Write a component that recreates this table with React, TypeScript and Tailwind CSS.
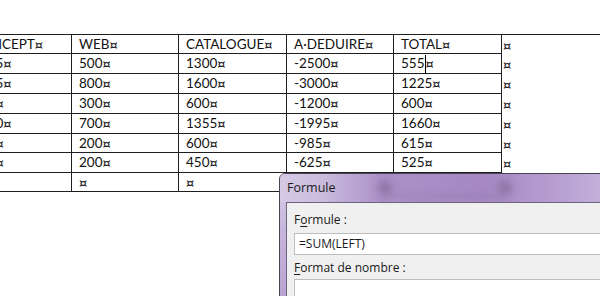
import React from "react";

const cols = ["CONCEPT", "WEB", "CATALOGUE", "A·DEDUIRE", "TOTAL"];
const rows = [
  ["1255", "500", "1300", "-2500", "555"],
  ["1825", "800", "1600", "-3000", "1225"],
  ["900", "300", "600", "-1200", "600"],
  ["1600", "700", "1355", "-1995", "1660"],
  ["800", "200", "600", "-985", "615"],
  ["500", "200", "450", "-625", "525"],
  ["", "", "", "", ""],
];
const widths = ["w-[108px]", "w-[107px]", "w-[108px]", "w-[107px]", "w-[108px]"];
const heights = ["h-[20px]", "h-[20px]", "h-[20px]", "h-[20px]", "h-[20px]", "h-[19px]", "h-[20px]", "h-[19px]"];

// Word's end-of-cell mark
function Mark() {
  return (
    <span className="text-[13px]" style={{ fontFamily: "'DejaVu Sans', sans-serif" }}>
      ¤
    </span>
  );
}

function Cell({ text, i, cursor }: { text: string; i: number; cursor?: boolean }) {
  return (
    <div
      className={`${widths[i]} shrink-0 border-r border-b border-[#1e1e1e] pl-[7px] pt-[1px] flex items-center ${
        i === 0 ? "border-l" : ""
      }`}
    >
      <span className="whitespace-nowrap">
        {text}
        {cursor && <span className="inline-block w-px h-[19px] bg-black align-middle -my-2" />}
        <Mark />
      </span>
    </div>
  );
}

export default function App() {
  const all = [cols, ...rows];
  return (
    <div className="relative w-[600px] h-[296px] overflow-hidden bg-white">
      <div
        className="mt-[34px] ml-[-36px] text-[13.5px] text-[#111] leading-none"
        style={{ fontFamily: "Lato, 'Open Sans', sans-serif" }}
      >
        {all.map((r, ri) => (
          <div key={ri} className={`flex ${heights[ri]} ${ri === 0 ? "border-t border-[#1e1e1e]" : ""}`}>
            {r.map((t, ci) => (
              <Cell key={ci} text={ri === 7 && ci === 0 ? "" : t} i={ci} cursor={ri === 1 && ci === 4} />
            ))}
            <div className="flex items-center pl-[1px] pt-[1px]">
              <Mark />
            </div>
          </div>
        ))}
      </div>

      {/* Formula dialog window */}
      <div
        className="absolute left-[279px] top-[173px] w-[340px] h-[140px] rounded-tl-[6px] border border-[#4a4452] overflow-hidden"
        style={{
          background: "linear-gradient(180deg, #d9cfe6 0%, #c7b6dc 40%, #b69ed0 100%)",
          fontFamily: "'Open Sans', 'Noto Sans', sans-serif",
        }}
      >
        <div
          className="relative h-[28px] flex items-center pl-[7px] text-[12.5px] text-[#1a1a1a]"
          style={{
            background:
              "linear-gradient(90deg, #d6cae5 0%, #cbbcde 12%, #ab91c8 30%, #a588c3 60%, #b9a2d3 85%, #cbb8df 100%)",
          }}
        >
          <span className="relative z-10">Formule</span>
          <div className="absolute left-[98px] top-[6px] w-[14px] h-[14px] rounded-full bg-[#5a4a6a] opacity-40 blur-[4px]" />
          <div className="absolute left-[218px] top-[6px] w-[14px] h-[14px] rounded-full bg-[#5a4a6a] opacity-40 blur-[4px]" />
          <div className="absolute left-[100px] top-[20px] w-[130px] h-[4px] bg-[#6a5a7a] opacity-20 blur-[3px]" />
        </div>
        <div className="ml-[6px] h-full border-t border-l border-[#6f6480] bg-[#f0f0f0] pl-[7px] pt-[9px] text-[12px] text-[#1a1a1a]">
          <div className="leading-[16px]">
            F<span className="underline underline-offset-2">o</span>rmule :
          </div>
          <div className="mt-[5px] h-[22px] border border-[#bdbdbd] bg-white flex items-center pl-[4px]">
            =SUM(LEFT)
          </div>
          <div className="mt-[5px] leading-[16px]">
            <span className="underline underline-offset-2">F</span>ormat de nombre :
          </div>
          <div className="mt-[3px] h-[22px] border border-[#bdbdbd] bg-white" />
        </div>
      </div>
    </div>
  );
}
